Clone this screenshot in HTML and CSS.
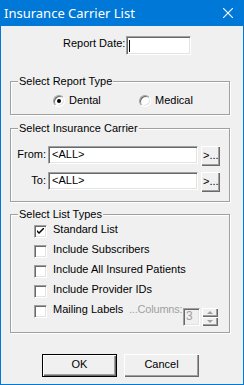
FILE: index.html
```html
<!DOCTYPE html>
<html lang="en">
  <head>
    <meta charset="UTF-8" />
    <title>Insurance Carrier List</title>
    <link rel="stylesheet" href="styles.css">
  </head>
  <body>
    <div class="window">
      <header class="titlebar">
        <span class="title">Insurance Carrier List</span>
        <svg class="close" width="10" height="10" viewBox="0 0 10 10">
          <path d="M0 0 L10 10 M10 0 L0 10" stroke="#fff" stroke-width="1.1" fill="none"/>
        </svg>
      </header>

      <main class="content">
        <div class="date-row">
          <span class="date-label">Report Date:</span>
          <div class="field date-field"><span class="caret"></span></div>
        </div>

        <section class="group type-group">
          <h2 class="group-title"><span>Select Report Type</span></h2>
          <div class="radio-row">
            <div class="radio-item dental"><span class="radio checked"></span>Dental</div>
            <div class="radio-item"><span class="radio"></span>Medical</div>
          </div>
        </section>

        <section class="group carrier-group">
          <h2 class="group-title"><span>Select Insurance Carrier</span></h2>
          <div class="carrier-row first">
            <span class="row-label">From:</span>
            <div class="field carrier-field">&lt;ALL&gt;</div>
            <button class="browse">&gt;...</button>
          </div>
          <div class="carrier-row">
            <span class="row-label">To:</span>
            <div class="field carrier-field">&lt;ALL&gt;</div>
            <button class="browse">&gt;...</button>
          </div>
        </section>

        <section class="group list-group">
          <h2 class="group-title"><span>Select List Types</span></h2>
          <div class="check-row first">
            <span class="check">
              <svg width="7" height="7" viewBox="0 0 7 7"><path d="M0 2 L0 4 L2 6 L7 1 L7 -1 L2 4 Z" fill="#000"/></svg>
            </span>
            Standard List
          </div>
          <div class="check-row"><span class="check"></span>Include Subscribers</div>
          <div class="check-row"><span class="check"></span>Include All Insured Patients</div>
          <div class="check-row"><span class="check"></span>Include Provider IDs</div>
          <div class="check-row last">
            <div class="mailing"><span class="check"></span>Mailing Labels</div>
            <span class="columns-label">...Columns:</span>
            <div class="field number-field">3</div>
            <div class="spinner">
              <div class="spin-btn"><span class="arrow up"></span></div>
              <div class="spin-btn"><span class="arrow down"></span></div>
            </div>
          </div>
        </section>

        <div class="actions">
          <button class="btn default">OK</button>
          <button class="btn">Cancel</button>
        </div>
      </main>
    </div>
  </body>
</html>
```

FILE: styles.css
```css
* {
  box-sizing: border-box;
}

html,
body {
  margin: 0;
}

body {
  font-family: "Liberation Sans", Arial, sans-serif;
  font-size: 11px;
  line-height: 13px;
  color: #000;
  background: #f0f0f0;
}

.window {
  width: 244px;
  height: 385px;
  border: 1px solid #0078d7;
  border-top: 0;
  background: #f0f0f0;
}

/* title bar */
.titlebar {
  height: 26px;
  margin: 0 -1px;
  padding-left: 4px;
  background: #0078d7;
  color: #fff;
  display: flex;
  align-items: center;
  justify-content: space-between;
}
.title {
  font-family: "Noto Sans", "Open Sans", sans-serif;
  font-size: 13px;
  line-height: 16px;
}
.close {
  margin-right: 11px;
}

/* sunken edit box */
.field {
  background: #fff;
  border: 1px solid;
  border-color: #a0a0a0 #fff #fff #a0a0a0;
  box-shadow: inset 1px 1px #696969, inset -1px -1px #e3e3e3;
}

.date-row {
  display: flex;
  align-items: flex-start;
  padding: 10px 0 0 62px;
}
.date-label {
  padding-top: 1px;
  margin-right: 1px;
}
.date-field {
  width: 65px;
  height: 19px;
  padding: 3px 0 0 2px;
}
.caret {
  display: block;
  width: 1px;
  height: 12px;
  background: #000;
}

/* group boxes */
.group {
  margin: 0 13px 0 9px;
  border: 1px solid #a0a0a0;
  box-shadow: inset 1px 1px #fff, 1px 1px #fff;
}
.group-title {
  margin: -7px 0 0 7px;
  font-size: 11px;
  font-weight: normal;
  line-height: 13px;
}
.group-title span {
  background: #f0f0f0;
  padding: 0 1px;
}

.type-group {
  margin-top: 26px;
  padding-bottom: 7px;
}
.radio-row {
  display: flex;
  margin-top: 6px;
  padding-left: 42px;
}
.radio-item {
  display: flex;
  align-items: flex-start;
  gap: 4px;
}
.radio-item.dental {
  width: 86px;
}
.radio {
  width: 12px;
  height: 12px;
  margin-top: 1px;
  border-radius: 50%;
  border: 1px solid;
  border-color: #a0a0a0 #fff #fff #a0a0a0;
  box-shadow: inset 1px 1px #696969, inset -1px -1px #e3e3e3;
  background: #fff;
  display: flex;
  align-items: center;
  justify-content: center;
}
.radio.checked::after {
  content: "";
  width: 4px;
  height: 4px;
  border-radius: 50%;
  background: #000;
}

.carrier-group {
  margin-top: 13px;
  padding-bottom: 9px;
}
.carrier-row {
  display: flex;
  align-items: flex-start;
  margin-top: 6px;
}
.carrier-row.first {
  margin-top: 11px;
}
.row-label {
  width: 35px;
  margin-right: 2px;
  padding-top: 2px;
  text-align: right;
}
.carrier-field {
  width: 150px;
  height: 18px;
  padding: 1px 0 0 3px;
}

/* raised buttons */
.browse,
.btn,
.spin-btn {
  background: #f0f0f0;
  border: 0;
  box-shadow: inset 1px 1px #fff, inset -1px -1px #696969, inset -2px -2px #a0a0a0;
}
.browse {
  width: 19px;
  height: 20px;
  margin-left: 3px;
  padding: 0 0 1px 2px;
  font: inherit;
  text-align: left;
}

.list-group {
  margin-top: 12px;
  padding-bottom: 6px;
}
.check-row {
  display: flex;
  align-items: flex-start;
  gap: 6px;
  margin: 5px 0 0 23px;
}
.check-row.first {
  margin-top: 2px;
}
.check {
  width: 13px;
  height: 13px;
  margin-top: 2px;
  border: 1px solid;
  border-color: #a0a0a0 #fff #fff #a0a0a0;
  box-shadow: inset 1px 1px #696969, inset -1px -1px #e3e3e3;
  background: #fff;
  display: flex;
  align-items: center;
  justify-content: center;
}
.check svg {
  display: block;
}
.check-row.last {
  gap: 0;
}
.mailing {
  width: 95px;
  display: flex;
  align-items: flex-start;
  gap: 6px;
}
.columns-label {
  width: 54px;
  color: #a0a0a0;
  letter-spacing: -0.2px;
  white-space: nowrap;
}
.number-field {
  width: 17px;
  height: 18px;
  margin-top: 5px;
  padding: 1px 0 0 2px;
  background: #f0f0f0;
  color: #a0a0a0;
  font-size: 12px;
}
.spinner {
  width: 16px;
  margin: 5px 0 0 2px;
}
.spin-btn {
  height: 9px;
  display: flex;
  align-items: center;
  justify-content: center;
}
.arrow {
  width: 0;
  height: 0;
  border-left: 3px solid transparent;
  border-right: 3px solid transparent;
}
.arrow.up {
  border-bottom: 3px solid #a0a0a0;
}
.arrow.down {
  border-top: 3px solid #a0a0a0;
}

/* dialog buttons */
.actions {
  display: flex;
  gap: 7px;
  margin-top: 21px;
  padding-left: 41px;
}
.btn {
  width: 75px;
  height: 23px;
  padding: 0 0 2px;
  font: inherit;
  display: flex;
  align-items: center;
  justify-content: center;
}
.btn.default {
  border: 1px solid #000;
}
```
